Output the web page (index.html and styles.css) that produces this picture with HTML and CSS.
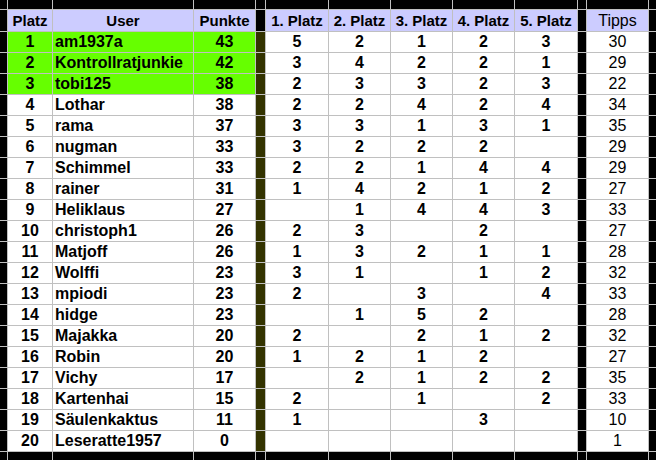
FILE: index.html
```html
<!DOCTYPE html>
<html lang="de">
<head>
<meta charset="utf-8">
<title>Tabelle</title>
<link rel="stylesheet" href="styles.css">
</head>
<body>
<table class="sheet">
<colgroup>
<col class="w-edge"><col class="w-platz"><col class="w-user"><col class="w-pkt"><col class="w-sep"><col class="w-p62"><col class="w-p61"><col class="w-p61"><col class="w-p61"><col class="w-p62"><col class="w-sep2"><col class="w-p61"><col class="w-edge">
</colgroup>
<tbody>
<tr class="edge"><td class="blk"></td><td class="blk"></td><td class="blk"></td><td class="blk"></td><td class="blk"></td><td class="blk"></td><td class="blk"></td><td class="blk"></td><td class="blk"></td><td class="blk"></td><td class="blk"></td><td class="blk"></td><td class="blk"></td></tr>
<tr class="head"><td class="blk"></td><th>Platz</th><th>User</th><th>Punkte</th><td class="blk"></td><th>1. Platz</th><th>2. Platz</th><th>3. Platz</th><th>4. Platz</th><th>5. Platz</th><td class="blk"></td><th class="reg">Tipps</th><td class="blk"></td></tr>
<tr><td class="blk"></td><td class="g">1</td><td class="g u">am1937a</td><td class="g">43</td><td class="ol"></td><td>5</td><td>2</td><td>1</td><td>2</td><td>3</td><td class="blk"></td><td class="reg">30</td><td class="blk"></td></tr>
<tr><td class="blk"></td><td class="g">2</td><td class="g u">Kontrollratjunkie</td><td class="g">42</td><td class="ol"></td><td>3</td><td>4</td><td>2</td><td>2</td><td>1</td><td class="blk"></td><td class="reg">29</td><td class="blk"></td></tr>
<tr><td class="blk"></td><td class="g">3</td><td class="g u">tobi125</td><td class="g">38</td><td class="ol"></td><td>2</td><td>3</td><td>3</td><td>2</td><td>3</td><td class="blk"></td><td class="reg">22</td><td class="blk"></td></tr>
<tr><td class="blk"></td><td>4</td><td class="u">Lothar</td><td>38</td><td class="ol"></td><td>2</td><td>2</td><td>4</td><td>2</td><td>4</td><td class="blk"></td><td class="reg">34</td><td class="blk"></td></tr>
<tr><td class="blk"></td><td>5</td><td class="u">rama</td><td>37</td><td class="ol"></td><td>3</td><td>3</td><td>1</td><td>3</td><td>1</td><td class="blk"></td><td class="reg">35</td><td class="blk"></td></tr>
<tr><td class="blk"></td><td>6</td><td class="u">nugman</td><td>33</td><td class="ol"></td><td>3</td><td>2</td><td>2</td><td>2</td><td></td><td class="blk"></td><td class="reg">29</td><td class="blk"></td></tr>
<tr><td class="blk"></td><td>7</td><td class="u">Schimmel</td><td>33</td><td class="ol"></td><td>2</td><td>2</td><td>1</td><td>4</td><td>4</td><td class="blk"></td><td class="reg">29</td><td class="blk"></td></tr>
<tr><td class="blk"></td><td>8</td><td class="u">rainer</td><td>31</td><td class="ol"></td><td>1</td><td>4</td><td>2</td><td>1</td><td>2</td><td class="blk"></td><td class="reg">27</td><td class="blk"></td></tr>
<tr><td class="blk"></td><td>9</td><td class="u">Heliklaus</td><td>27</td><td class="ol"></td><td></td><td>1</td><td>4</td><td>4</td><td>3</td><td class="blk"></td><td class="reg">33</td><td class="blk"></td></tr>
<tr><td class="blk"></td><td>10</td><td class="u">christoph1</td><td>26</td><td class="ol"></td><td>2</td><td>3</td><td></td><td>2</td><td></td><td class="blk"></td><td class="reg">27</td><td class="blk"></td></tr>
<tr><td class="blk"></td><td>11</td><td class="u">Matjoff</td><td>26</td><td class="ol"></td><td>1</td><td>3</td><td>2</td><td>1</td><td>1</td><td class="blk"></td><td class="reg">28</td><td class="blk"></td></tr>
<tr><td class="blk"></td><td>12</td><td class="u">Wolffi</td><td>23</td><td class="ol"></td><td>3</td><td>1</td><td></td><td>1</td><td>2</td><td class="blk"></td><td class="reg">32</td><td class="blk"></td></tr>
<tr><td class="blk"></td><td>13</td><td class="u">mpiodi</td><td>23</td><td class="ol"></td><td>2</td><td></td><td>3</td><td></td><td>4</td><td class="blk"></td><td class="reg">33</td><td class="blk"></td></tr>
<tr><td class="blk"></td><td>14</td><td class="u">hidge</td><td>23</td><td class="ol"></td><td></td><td>1</td><td>5</td><td>2</td><td></td><td class="blk"></td><td class="reg">28</td><td class="blk"></td></tr>
<tr><td class="blk"></td><td>15</td><td class="u">Majakka</td><td>20</td><td class="ol"></td><td>2</td><td></td><td>2</td><td>1</td><td>2</td><td class="blk"></td><td class="reg">32</td><td class="blk"></td></tr>
<tr><td class="blk"></td><td>16</td><td class="u">Robin</td><td>20</td><td class="ol"></td><td>1</td><td>2</td><td>1</td><td>2</td><td></td><td class="blk"></td><td class="reg">27</td><td class="blk"></td></tr>
<tr><td class="blk"></td><td>17</td><td class="u">Vichy</td><td>17</td><td class="ol"></td><td></td><td>2</td><td>1</td><td>2</td><td>2</td><td class="blk"></td><td class="reg">35</td><td class="blk"></td></tr>
<tr><td class="blk"></td><td>18</td><td class="u">Kartenhai</td><td>15</td><td class="ol"></td><td>2</td><td></td><td>1</td><td></td><td>2</td><td class="blk"></td><td class="reg">33</td><td class="blk"></td></tr>
<tr><td class="blk"></td><td>19</td><td class="u">Säulenkaktus</td><td>11</td><td class="ol"></td><td>1</td><td></td><td></td><td>3</td><td></td><td class="blk"></td><td class="reg">10</td><td class="blk"></td></tr>
<tr><td class="blk"></td><td>20</td><td class="u">Leseratte1957</td><td>0</td><td class="ol"></td><td></td><td></td><td></td><td></td><td></td><td class="blk"></td><td class="reg">1</td><td class="blk"></td></tr>
<tr class="edge"><td class="blk"></td><td class="blk"></td><td class="blk"></td><td class="blk"></td><td class="blk"></td><td class="blk"></td><td class="blk"></td><td class="blk"></td><td class="blk"></td><td class="blk"></td><td class="blk"></td><td class="blk"></td><td class="blk"></td></tr>
</tbody>
</table>
</body>
</html>
```

FILE: styles.css
```css
html, body {
  margin: 0;
  padding: 0;
  background: #000000;
  overflow: hidden;
}

.sheet {
  table-layout: fixed;
  border-collapse: separate;
  border-spacing: 1px;
  background: #c0c0c0;
  margin: -1px 0 0 -1px;
  width: 658px;
  font-family: "Liberation Sans", Arial, sans-serif;
  color: #000000;
}

.w-edge { width: 7px; }
.w-platz { width: 44px; }
.w-user { width: 140px; }
.w-pkt { width: 61px; }
.w-sep { width: 9px; }
.w-sep2 { width: 8px; }
.w-p61 { width: 61px; }
.w-p62 { width: 62px; }

.sheet td,
.sheet th {
  padding: 0;
  height: 20px;
  line-height: 20px;
  background: #ffffff;
  font-size: 16px;
  font-weight: bold;
  text-align: center;
  white-space: nowrap;
  overflow: hidden;
  vertical-align: middle;
}

.sheet .edge td {
  height: 9px;
  line-height: 9px;
}

.sheet .head th,
.sheet .head td {
  height: 21px;
  line-height: 21px;
}

.sheet .head th {
  background: #ccccff;
  font-size: 15px;
}

.sheet .head th.reg {
  font-size: 16px;
}

.sheet .reg {
  font-weight: normal;
}

.sheet .blk {
  background: #000000;
}

.sheet .ol {
  background: #333300;
}

.sheet .g {
  background: #66ff00;
}

.sheet .u {
  text-align: left;
  padding-left: 2px;
}
```
